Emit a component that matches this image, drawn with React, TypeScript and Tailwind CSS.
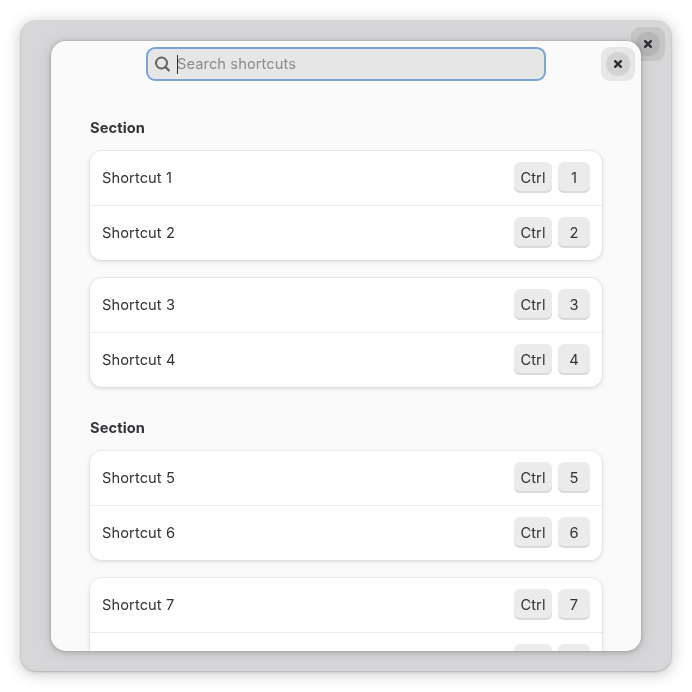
type CloseButtonProps = { back?: boolean };

function CloseButton({ back = false }: CloseButtonProps) {
  return (
    <button
      aria-label="Close"
      className={`flex h-[34px] w-[34px] shrink-0 items-center justify-center rounded-[9px] ${back ? "bg-[#c5c5c6]" : "bg-[#e6e6e6]"}`}
    >
      <span className={`flex h-6 w-6 items-center justify-center rounded-full ${back ? "bg-[#b5b5b7]" : "bg-[#d3d3d3]"}`}>
        <svg width="16" height="16" viewBox="0 0 16 16" fill="none" stroke="#2f2f33" strokeWidth="2.3" strokeLinecap="round">
          <path d="M5.1 5.1l5.8 5.8M10.9 5.1l-5.8 5.8" />
        </svg>
      </span>
    </button>
  );
}

function Shortcut({ n }: { n: number }) {
  return (
    <div className="flex h-[55px] shrink-0 items-center justify-between border-b border-[#ebebeb] px-3 last:h-[54px] last:border-b-0">
      <span>Shortcut {n}</span>
      <span className="flex gap-1.5 pb-px">
        <kbd className="flex h-[31px] w-[38px] items-center justify-center rounded-md bg-[#ebebeb] font-[Inter,sans-serif] shadow-[inset_0_-2px_#dadada]">Ctrl</kbd>
        <kbd className="flex h-[31px] w-8 items-center justify-center rounded-md bg-[#ebebeb] font-[Inter,sans-serif] shadow-[inset_0_-2px_#dadada]">{n}</kbd>
      </span>
    </div>
  );
}

function Group({ start }: { start: number }) {
  return (
    <div className="h-[109px] overflow-hidden rounded-xl bg-white shadow-[0_0_0_1px_rgba(0,0,6,0.03),0_1px_3px_1px_rgba(0,0,6,0.07),0_2px_6px_2px_rgba(0,0,6,0.03)]">
      <Shortcut n={start} />
      <Shortcut n={start + 1} />
    </div>
  );
}

function Section({ start }: { start: number }) {
  return (
    <section>
      <h2 className="mb-[13px] h-5 font-bold leading-5">Section</h2>
      <div className="flex flex-col gap-[18px]">
        <Group start={start} />
        <Group start={start + 2} />
      </div>
    </section>
  );
}

export default function App() {
  return (
    <div className="h-[692px] w-[692px] overflow-hidden bg-white p-[21px] font-[Inter,sans-serif] text-[14.667px] leading-5 tracking-[0.08px] text-[#323237]">
      <div className="relative h-[650px] w-[650px] rounded-[15px] bg-[#d7d7d9] px-[30px] py-5 shadow-[0_0_0_1px_rgba(0,0,0,0.05),0_1px_3px_rgba(0,0,0,0.18),0_2px_14px_3px_rgba(0,0,0,0.16)]">
        <div className="absolute right-1.5 top-1.5">
          <CloseButton back />
        </div>
        <main className="relative h-[610px] rounded-[15px] shadow-[0_1px_5px_1px_rgba(0,0,0,0.16),0_2px_14px_3px_rgba(0,0,0,0.07),0_0_0_1px_rgba(0,0,0,0.05)] will-change-transform">
          <div className="h-full overflow-hidden rounded-[15px] bg-[#fafafa]">
            <header className="grid h-[46px] grid-cols-[1fr_400px_1fr] items-center px-1.5">
              <span />
              <div className="flex h-[34px] items-center rounded-[9px] border-2 border-[#78a4d8] bg-[#e6e6e6] pl-1.5">
                <svg width="16" height="16" viewBox="0 0 16 16" fill="none" stroke="#646467" strokeWidth="2">
                  <circle cx="7.5" cy="7" r="5.5" />
                  <path d="M11.4 11l3.4 3.4" strokeLinecap="round" strokeWidth="2.2" />
                </svg>
                <span className="ml-[7px] h-[19px] w-px bg-[#2f2f33]" />
                <span className="-ml-px text-[#8b8b8e]">Search shortcuts</span>
              </div>
              <div className="flex justify-end">
                <CloseButton />
              </div>
            </header>
            <div className="flex flex-col gap-[31px] px-[39px] pt-[31px]">
              <Section start={1} />
              <Section start={5} />
            </div>
          </div>
        </main>
      </div>
    </div>
  );
}
